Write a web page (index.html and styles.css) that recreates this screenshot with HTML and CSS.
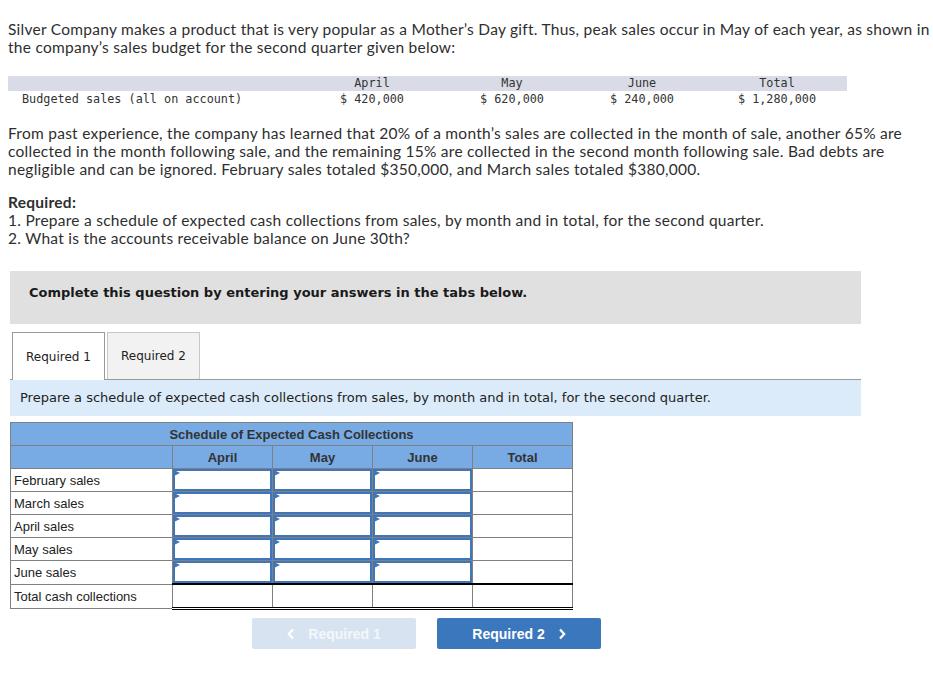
FILE: index.html
```html
<!DOCTYPE html>
<html>
<head>
<meta charset="utf-8">
<link rel="stylesheet" href="styles.css">
</head>
<body>
<div class="page">
  <p class="intro">Silver Company makes a product that is very popular as a Mother’s Day gift. Thus, peak sales occur in May of each year, as shown in the company’s sales budget for the second quarter given below:</p>

  <div class="budget">
    <div class="bhead">
      <span></span><span>April</span><span>May</span><span>June</span><span class="tot">Total</span>
    </div>
    <div class="brow">
      <span class="blabel">Budgeted sales (all on account)</span><span>$ 420,000</span><span>$ 620,000</span><span>$ 240,000</span><span class="tot">$ 1,280,000</span>
    </div>
  </div>

  <p class="para">From past experience, the company has learned that 20% of a month’s sales are collected in the month of sale, another 65% are collected in the month following sale, and the remaining 15% are collected in the second month following sale. Bad debts are negligible and can be ignored. February sales totaled $350,000, and March sales totaled $380,000.</p>

  <div class="required">
    <div class="req-title">Required:</div>
    <div>1. Prepare a schedule of expected cash collections from sales, by month and in total, for the second quarter.</div>
    <div>2. What is the accounts receivable balance on June 30th?</div>
  </div>

  <div class="notice">Complete this question by entering your answers in the tabs below.</div>

  <div class="tabs">
    <div class="tab active">Required 1</div>
    <div class="tab">Required 2</div>
  </div>
  <div class="instruct">Prepare a schedule of expected cash collections from sales, by month and in total, for the second quarter.</div>

  <table class="sched">
    <tr class="h1"><th colspan="5">Schedule of Expected Cash Collections</th></tr>
    <tr class="h2"><th class="lab"></th><th>April</th><th>May</th><th>June</th><th>Total</th></tr>
    <tr><td class="lab">February sales</td><td class="in"><div class="box"></div></td><td class="in"><div class="box"></div></td><td class="in"><div class="box"></div></td><td></td></tr>
    <tr><td class="lab">March sales</td><td class="in"><div class="box"></div></td><td class="in"><div class="box"></div></td><td class="in"><div class="box"></div></td><td></td></tr>
    <tr><td class="lab">April sales</td><td class="in"><div class="box"></div></td><td class="in"><div class="box"></div></td><td class="in"><div class="box"></div></td><td></td></tr>
    <tr><td class="lab">May sales</td><td class="in"><div class="box"></div></td><td class="in"><div class="box"></div></td><td class="in"><div class="box"></div></td><td></td></tr>
    <tr><td class="lab">June sales</td><td class="in"><div class="box"></div></td><td class="in"><div class="box"></div></td><td class="in"><div class="box"></div></td><td></td></tr>
    <tr class="total"><td class="lab">Total cash collections</td><td class="t"></td><td class="t"></td><td class="t"></td><td class="t"></td></tr>
  </table>

  <div class="nav">
    <div class="btn disabled"><svg width="8" height="12" viewBox="0 0 8 12"><path d="M6 1.5 L1.8 6 L6 10.5" fill="none" stroke="#fff" stroke-width="2.2"/></svg><span>Required 1</span></div>
    <div class="btn primary"><span>Required 2</span><svg width="8" height="12" viewBox="0 0 8 12"><path d="M2 1.5 L6.2 6 L2 10.5" fill="none" stroke="#fff" stroke-width="2.2"/></svg></div>
  </div>
</div>
</body>
</html>
```

FILE: styles.css
```css
html, body {
  margin: 0;
  padding: 0;
  background: #fff;
}
.page {
  padding: 20px 0 0 8px;
  color: #2e2e2e;
  font-family: "Lato", "Open Sans", sans-serif;
  font-size: 15.5px;
  letter-spacing: 0.26px;
}
.intro {
  margin: 0;
  line-height: 18px;
  width: 925px;
}
.budget {
  margin-top: 20px;
  width: 839px;
  font-family: "DejaVu Sans Mono", "Liberation Mono", monospace;
  font-size: 11.8px;
  letter-spacing: 0;
  color: #333;
}
.bhead, .brow {
  display: grid;
  grid-template-columns: 294px 140px 140px 120px 145px;
  text-align: center;
}
.bhead {
  background: #d9dce6;
  height: 15px;
  line-height: 15px;
}
.brow {
  height: 16px;
  line-height: 16px;
}
.tot {
  padding-left: 5px;
}
.blabel {
  text-align: left;
  padding-left: 14px;
}
.para {
  margin: 17px 0 0 0;
  line-height: 18px;
  width: 925px;
}
.required {
  margin-top: 15px;
  line-height: 18px;
}
.req-title {
  font-weight: bold;
}
.notice {
  margin: 24px 0 0 2px;
  width: 851px;
  height: 53px;
  box-sizing: border-box;
  background: #e0e0e0;
  padding: 14px 0 0 19px;
  font-family: "DejaVu Sans", Verdana, sans-serif;
  font-size: 13px;
  letter-spacing: 0;
  font-weight: bold;
  color: #1a1a1a;
  line-height: 16px;
}
.tabs {
  display: flex;
  gap: 2px;
  margin: 8px 0 0 4px;
  height: 47px;
}
.tab {
  width: 93px;
  box-sizing: border-box;
  border: 1px solid #c8c8c8;
  border-bottom: none;
  background: #f2f2f2;
  font-family: "DejaVu Sans", Verdana, sans-serif;
  font-size: 12px;
  letter-spacing: 0;
  color: #222;
  display: flex;
  align-items: center;
  justify-content: center;
}
.tab.active {
  background: #fff;
  border-color: #9a9a9a;
  height: 48px;
  position: relative;
  z-index: 1;
}
.instruct {
  margin-left: 2px;
  width: 851px;
  height: 37px;
  box-sizing: border-box;
  border-top: 1px solid #999;
  background: #dbebf9;
  padding-left: 10px;
  font-family: "DejaVu Sans", Verdana, sans-serif;
  font-size: 13px;
  letter-spacing: 0;
  color: #222;
  line-height: 36px;
}
.sched {
  margin: 6px 0 0 2px;
  border-collapse: collapse;
  font-family: "Liberation Sans", Arial, sans-serif;
  font-size: 13px;
  letter-spacing: 0;
  color: #222;
}
.sched th, .sched td {
  border: 1px solid #808080;
  padding: 0;
  height: 22px;
}
.sched th {
  background: #78aae3;
  font-size: 13px;
  color: #333;
  text-align: center;
}
.sched td {
  width: 99px;
}
.sched td.lab {
  width: 158px;
  padding-left: 3px;
  text-align: left;
}
.sched td.in {
  padding: 0;
  vertical-align: top;
}
.box {
  height: 18px;
  border: 2px solid #3f76b9;
  position: relative;
}
.box::before {
  content: "";
  position: absolute;
  left: -1px;
  top: -1px;
  border-left: 6px solid #3f76b9;
  border-top: 3px solid transparent;
  border-bottom: 3px solid transparent;
}
.sched tr.total td.t {
  border-top: 2px solid #000;
  border-bottom: 3px double #000;
}
.nav {
  display: flex;
  gap: 21px;
  margin: 8px 0 0 244px;
}
.btn {
  width: 164px;
  height: 31px;
  border-radius: 2px;
  display: flex;
  align-items: center;
  justify-content: center;
  gap: 13px;
  font-family: "Liberation Sans", Arial, sans-serif;
  font-size: 14px;
  letter-spacing: 0;
  font-weight: bold;
  color: #fff;
}
.btn.disabled {
  background: #d7e3f1;
  color: #f3f7fb;
}
.btn.primary {
  background: #3b77bc;
}
```
